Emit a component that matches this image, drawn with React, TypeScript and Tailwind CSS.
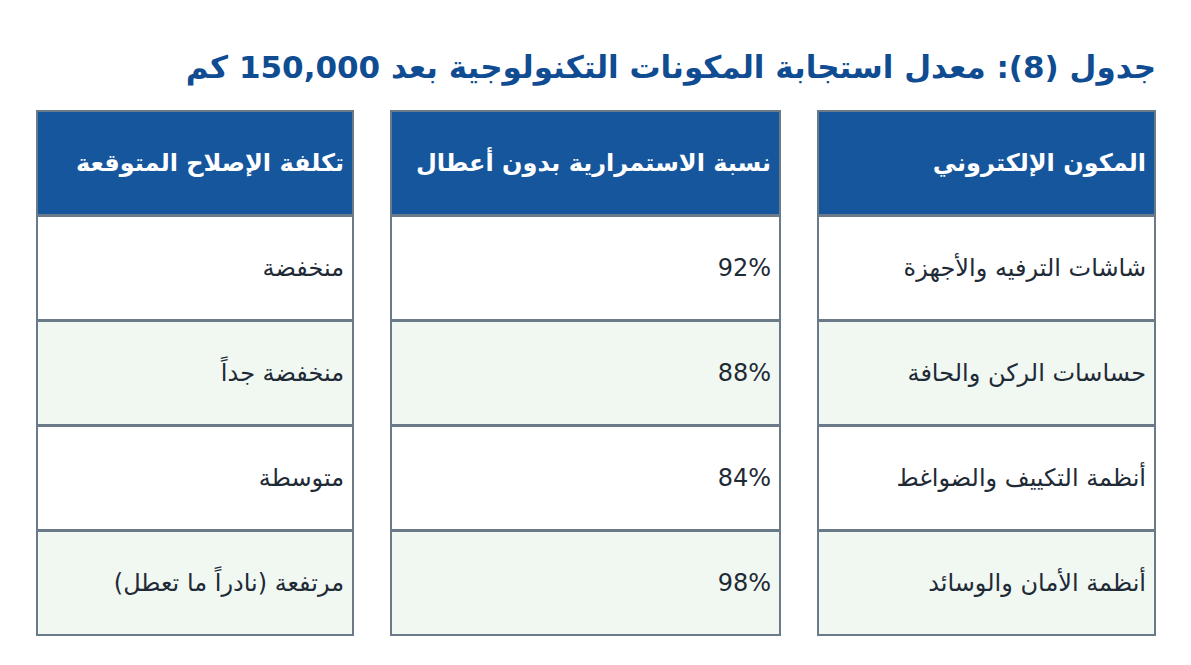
const headers = [
  "المكون الإلكتروني",
  "نسبة الاستمرارية بدون أعطال",
  "تكلفة الإصلاح المتوقعة",
];

const columns = [
  {
    width: "w-[339px]",
    cells: [
      "شاشات الترفيه والأجهزة",
      "حساسات الركن والحافة",
      "أنظمة التكييف والضواغط",
      "أنظمة الأمان والوسائد",
    ],
  },
  {
    width: "w-[391px]",
    cells: ["92%", "88%", "84%", "98%"],
  },
  {
    width: "w-[318px]",
    cells: ["منخفضة", "منخفضة جداً", "متوسطة", "مرتفعة (نادراً ما تعطل)"],
  },
];

export default function App() {
  return (
    <div
      dir="rtl"
      className="min-h-[665px] bg-white px-[35px] pt-[46px] font-['DejaVu_Sans',sans-serif]"
    >
      <h1 className="h-[42px] text-[31px] font-bold leading-[42px] text-[#0f4c91]">
        جدول (8): معدل استجابة المكونات التكنولوجية بعد 150,000 كم
      </h1>

      <div className="mt-[22px] flex gap-[36px]">
        {columns.map((col, i) => (
          <div
            key={i}
            className={`${col.width} flex flex-col border-2 border-[#6b7a89]`}
          >
            <div className="flex h-[102px] items-center bg-[#15569d] px-2 text-[24px] font-bold text-white">
              {headers[i]}
            </div>
            {col.cells.map((cell, r) => (
              <div
                key={cell}
                dir={i === 1 ? "ltr" : "rtl"}
                className={`flex h-[105px] items-center border-t-[3px] border-[#6b7a89] px-2 text-[24px] text-[#1e2a36] ${
                  i === 1 ? "justify-end" : ""
                } ${r % 2 === 1 ? "bg-[#f1f8f2]" : "bg-white"}`}
              >
                {cell}
              </div>
            ))}
          </div>
        ))}
      </div>
    </div>
  );
}
